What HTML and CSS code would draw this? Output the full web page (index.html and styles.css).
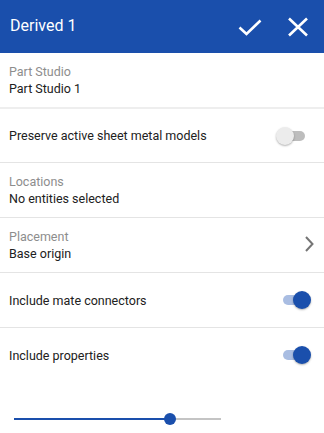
FILE: index.html
```html
<!DOCTYPE html>
<html>
<head>
<meta charset="utf-8">
<link rel="stylesheet" href="styles.css">
</head>
<body>
<div class="panel">
  <header class="header">
    <div class="title">Derived 1</div>
    <div class="actions">
      <svg class="icon" width="24" height="24" viewBox="0 0 24 24"><path d="M1.5 12.5 L8.5 19 L22.5 5.5" fill="none" stroke="#fff" stroke-width="2.6"/></svg>
      <svg class="icon" width="24" height="24" viewBox="0 0 24 24"><path d="M3 3.5 L21 20.5 M21 3.5 L3 20.5" fill="none" stroke="#fff" stroke-width="2.6"/></svg>
    </div>
  </header>

  <section class="field first">
    <div class="label">Part Studio</div>
    <div class="value">Part Studio 1</div>
  </section>

  <div class="row preserve">
    <div class="value">Preserve active sheet metal models</div>
    <div class="switch off"><span class="track"></span><span class="thumb"></span></div>
  </div>

  <section class="field">
    <div class="label">Locations</div>
    <div class="value">No entities selected</div>
  </section>

  <section class="field nav">
    <div>
      <div class="label">Placement</div>
      <div class="value">Base origin</div>
    </div>
    <svg class="chevron" width="12" height="18" viewBox="0 0 12 18"><path d="M3 2 L9.5 9 L3 16" fill="none" stroke="#757575" stroke-width="2"/></svg>
  </section>

  <div class="row">
    <div class="value">Include mate connectors</div>
    <div class="switch on"><span class="track"></span><span class="thumb"></span></div>
  </div>

  <div class="row last">
    <div class="value">Include properties</div>
    <div class="switch on"><span class="track"></span><span class="thumb"></span></div>
  </div>

  <div class="slider">
    <div class="rail">
      <div class="fill" style="width: 75.4%"></div>
      <div class="knob" style="left: 75.4%"></div>
    </div>
  </div>
</div>
</body>
</html>
```

FILE: styles.css
```css
* { box-sizing: border-box; }
html, body { margin: 0; padding: 0; background: #fff; }
body {
  font-family: Roboto, "Noto Sans", "Liberation Sans", sans-serif;
  width: 324px;
  height: 433px;
  overflow: hidden;
}
.panel { display: flex; flex-direction: column; }

.header {
  height: 53px;
  background: #1a4fac;
  color: #fff;
  display: flex;
  align-items: center;
  justify-content: space-between;
  padding: 0 14px 0 10px;
}
.title { font-size: 16px; line-height: 20px; padding-bottom: 1px; }
.actions { display: flex; gap: 24px; align-items: center; }
.icon { display: block; }

.label { color: #8d8d8d; font-size: 12.5px; line-height: 17px; }
.value { color: #212121; font-size: 12.5px; line-height: 17px; }

.field {
  height: 55px;
  padding: 10px 10px 10px 9px;
  border-top: 1px solid #e4e4e4;
}
.field.first { height: 56px; border-top: none; border-bottom: 2px solid #eeeeee; }
.nav { display: flex; align-items: center; justify-content: space-between; padding-right: 9px; }
.chevron { display: block; margin-top: -2px; }

.row {
  height: 55px;
  border-top: 1px solid #e4e4e4;
  display: flex;
  align-items: center;
  justify-content: space-between;
  padding: 0 18px 0 9px;
}
.row.preserve { height: 53px; border-top: none; }

.switch { position: relative; width: 26px; height: 18px; }
.switch .track {
  position: absolute; top: 4px; height: 10px; border-radius: 5px;
}
.switch .thumb {
  position: absolute; top: 0; width: 18px; height: 18px; border-radius: 50%;
  box-shadow: 0 1px 2px rgba(0,0,0,0.3);
}
.switch.off .track { background: #bdbdbd; left: 4px; right: 1px; }
.switch.off .thumb { left: -4px; background: #ececec; }
.switch.on .track { background: #a9bde2; left: 3px; right: -4px; }
.switch.on .thumb { left: 13px; background: #1a4fac; }

.slider { padding: 36px 0 0 14px; }
.rail { position: relative; width: 207px; height: 2px; background: #c4c4c4; }
.fill { position: absolute; left: 0; top: 0; height: 2px; background: #1a4fac; }
.knob {
  position: absolute; top: -5px; width: 12px; height: 12px; margin-left: -6px;
  border-radius: 50%; background: #1a4fac;
}
```
